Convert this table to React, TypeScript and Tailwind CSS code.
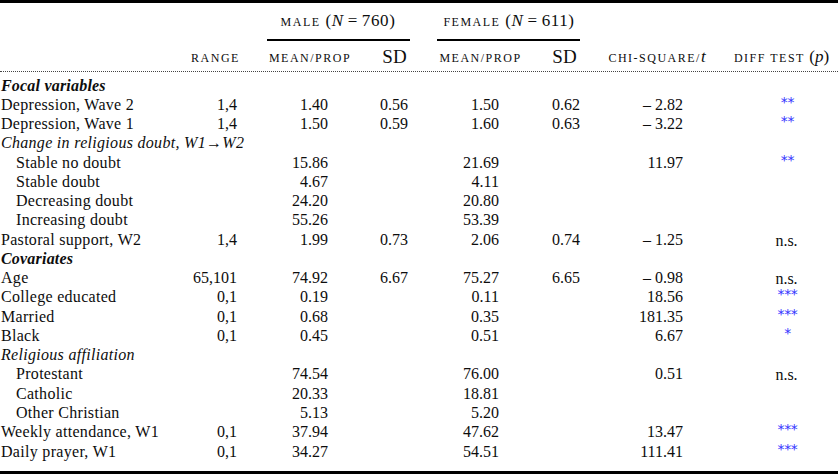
import React from "react";

type Row = {
  label: string;
  kind: "section" | "sub" | "item" | "indent";
  range?: string;
  mm?: string;
  msd?: string;
  fm?: string;
  fsd?: string;
  chi?: string;
  diff?: string;
};

const rows: Row[] = [
  { label: "Focal variables", kind: "section" },
  { label: "Depression, Wave 2", kind: "item", range: "1,4", mm: "1.40", msd: "0.56", fm: "1.50", fsd: "0.62", chi: "\u2013 2.82", diff: "**" },
  { label: "Depression, Wave 1", kind: "item", range: "1,4", mm: "1.50", msd: "0.59", fm: "1.60", fsd: "0.63", chi: "\u2013 3.22", diff: "**" },
  { label: "Change in religious doubt, W1\u2192W2", kind: "sub" },
  { label: "Stable no doubt", kind: "indent", mm: "15.86", fm: "21.69", chi: "11.97", diff: "**" },
  { label: "Stable doubt", kind: "indent", mm: "4.67", fm: "4.11" },
  { label: "Decreasing doubt", kind: "indent", mm: "24.20", fm: "20.80" },
  { label: "Increasing doubt", kind: "indent", mm: "55.26", fm: "53.39" },
  { label: "Pastoral support, W2", kind: "item", range: "1,4", mm: "1.99", msd: "0.73", fm: "2.06", fsd: "0.74", chi: "\u2013 1.25", diff: "n.s." },
  { label: "Covariates", kind: "section" },
  { label: "Age", kind: "item", range: "65,101", mm: "74.92", msd: "6.67", fm: "75.27", fsd: "6.65", chi: "\u2013 0.98", diff: "n.s." },
  { label: "College educated", kind: "item", range: "0,1", mm: "0.19", fm: "0.11", chi: "18.56", diff: "***" },
  { label: "Married", kind: "item", range: "0,1", mm: "0.68", fm: "0.35", chi: "181.35", diff: "***" },
  { label: "Black", kind: "item", range: "0,1", mm: "0.45", fm: "0.51", chi: "6.67", diff: "*" },
  { label: "Religious affiliation", kind: "sub" },
  { label: "Protestant", kind: "indent", mm: "74.54", fm: "76.00", chi: "0.51", diff: "n.s." },
  { label: "Catholic", kind: "indent", mm: "20.33", fm: "18.81" },
  { label: "Other Christian", kind: "indent", mm: "5.13", fm: "5.20" },
  { label: "Weekly attendance, W1", kind: "item", range: "0,1", mm: "37.94", fm: "47.62", chi: "13.47", diff: "***" },
  { label: "Daily prayer, W1", kind: "item", range: "0,1", mm: "34.27", fm: "54.51", chi: "111.41", diff: "***" },
];

const cols = "grid grid-cols-[180px_75px_110px_60px_111px_57px_128px_117px]";

function Diff({ v }: { v?: string }) {
  if (!v) return <div />;
  if (v === "n.s.") {
    return (
      <div className="text-center pl-[14px] relative top-[1px]">n.s.</div>
    );
  }
  return (
    <div className="text-center pl-[16px] relative">
      <span className="relative -top-[3px] text-[#3333ff] text-[14px] font-['DejaVu_Sans',sans-serif] tracking-[-0.3px]">
        {v}
      </span>
    </div>
  );
}

function SC({ children }: { children: React.ReactNode }) {
  return <span className="uppercase text-[12px] tracking-[1.5px]">{children}</span>;
}

export default function App() {
  return (
    <div className="w-[838px] h-[474px] bg-white text-[#0d0d0d] font-['Liberation_Serif',serif] text-[16px] overflow-hidden flex flex-col">
      <div className="h-[3px] bg-black" />
      {/* Group headers */}
      <div className={`${cols} pt-[7px] leading-[22px] text-[17px]`}>
        <div />
        <div />
        <div className="col-span-2 flex flex-col items-stretch">
          <div className="text-center pr-[4px] whitespace-nowrap tracking-[0.6px]">
            <SC>Male</SC> (<i>N</i>{"\u2009"}={"\u2009"}760)
          </div>
          <div className="h-[1.5px] bg-black ml-[12px] mr-[15px] mt-[6px]" />
        </div>
        <div className="col-span-2 flex flex-col items-stretch">
          <div className="text-center pr-[0px] whitespace-nowrap tracking-[0.6px]">
            <SC>Female</SC> (<i>N</i>{"\u2009"}={"\u2009"}611)
          </div>
          <div className="h-[1.5px] bg-black ml-[12px] mr-[13px] mt-[6px]" />
        </div>
        <div />
        <div />
      </div>
      {/* Column headers */}
      <div className={`${cols} mt-[6px] leading-[20px] whitespace-nowrap text-[17px]`}>
        <div />
        <div className="text-center pr-[4px]"><SC>Range</SC></div>
        <div className="text-center"><SC>Mean/prop</SC></div>
        <div className="text-center text-[19px] pr-[1px]">SD</div>
        <div className="text-center"><SC>Mean/prop</SC></div>
        <div className="text-center text-[19px]">SD</div>
        <div className="text-center"><SC>Chi-square/</SC><i>t</i></div>
        <div className="text-center pl-[4px]"><SC>Diff test </SC>(<i>p</i>)</div>
      </div>
      <div className="mt-[3px] border-t border-dotted border-[#444]" />
      {/* Body */}
      <div className="pt-[4px]">
        {rows.map((r, i) => (
          <div key={i} className={`${cols} leading-[19.27px] h-[19.27px] whitespace-nowrap`}>
            <div
              className={
                r.kind === "section"
                  ? "font-bold italic pl-[1px] tracking-[0.2px]"
                  : r.kind === "sub"
                  ? "italic pl-[1px] tracking-[0.3px]"
                  : r.kind === "indent"
                  ? "pl-[16px] tracking-[0.3px]"
                  : "pl-[1px] tracking-[0.3px]"
              }
            >
              {r.label}
            </div>
            <div className="text-right pr-[18px]">{r.range}</div>
            <div className="text-right pr-[37px]">{r.mm}</div>
            <div className="text-right pr-[17px]">{r.msd}</div>
            <div className="text-right pr-[37px]">{r.fm}</div>
            <div className="text-right pr-[13px]">{r.fsd}</div>
            <div className="text-right pr-[38px]">{r.chi}</div>
            <Diff v={r.diff} />
          </div>
        ))}
      </div>
      <div className="flex-1" />
      <div className="h-[3px] bg-black" />
    </div>
  );
}
